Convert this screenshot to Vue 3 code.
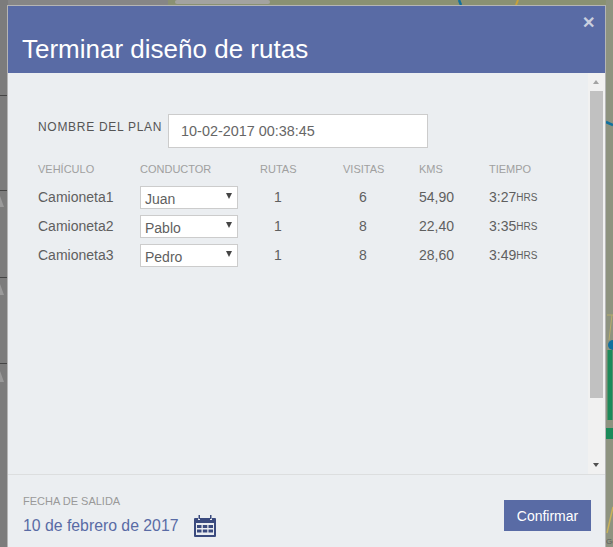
<template>
  <div class="page">
    <svg class="map" width="613" height="547" viewBox="0 0 613 547">
      <rect width="613" height="547" fill="#8c9082" />
      <rect x="0" y="0" width="168" height="6" fill="#868686" />
      <rect x="168" y="0" width="445" height="6" fill="#8a9173" />
      <rect x="175" y="0" width="95" height="4" rx="2" fill="#a3a3a0" />
      <rect x="0" y="0" width="8" height="547" fill="#7c7c7c" />
      <rect x="606" y="0" width="7" height="547" fill="#8e9380" />
      <path d="M0 95.500H8M0 190.500H8M0 277.500H8M0 363.500H8" stroke="#454545" stroke-width="1" />
      <path d="M0 196l4 11H0zM0 284l4 11H0zM0 371l4 11H0z" fill="#9a9a9a" />
      <path d="M459 0l2 5" stroke="#11709e" stroke-width="2.500" fill="none" />
      <path d="M518 0l-2 5" stroke="#c9a23a" stroke-width="2" fill="none" />
      <path d="M606 122l7 3" stroke="#11709e" stroke-width="2.500" fill="none" />
      <path d="M607 315h6M612 315l-3 25" stroke="#b7ac6c" stroke-width="1" fill="none" />
      <circle cx="613" cy="345" r="5" fill="#11709e" />
      <path d="M610 350v70" stroke="#1d8a5a" stroke-width="5" fill="none" />
      <rect x="606" y="428" width="7" height="11" fill="#1d8a5a" />
      <path d="M607 533l6-26" stroke="#c9b25a" stroke-width="1.500" fill="none" />
      <text x="606" y="544" font-size="8" fill="#5c5c5c" font-family="Liberation Sans">Go</text>
    </svg>
    <div class="modal">
      <header class="head">
        <h1>Terminar diseño de rutas</h1>
        <span class="close">✕</span>
      </header>
      <div class="middle">
        <div class="content">
          <div class="plan">
            <label>NOMBRE DEL PLAN</label>
            <div class="plan-input">10-02-2017 00:38:45</div>
          </div>
          <div class="grid">
            <div class="th">VEHÍCULO</div>
            <div class="th">CONDUCTOR</div>
            <div class="th">RUTAS</div>
            <div class="th">VISITAS</div>
            <div class="th">KMS</div>
            <div class="th">TIEMPO</div>
            <template v-for="r in rows" :key="r.name">
              <div class="td">{{ r.name }}</div>
              <div class="td driver">
                <div class="select">{{ r.driver }}<span class="caret"></span></div>
              </div>
              <div class="td num-r">{{ r.routes }}</div>
              <div class="td num-v">{{ r.visits }}</div>
              <div class="td">{{ r.kms }}</div>
              <div class="td">{{ r.time }}<small>HRS</small></div>
            </template>
          </div>
        </div>
        <div class="scrollbar">
          <span class="arrow up"></span>
          <div class="thumb"></div>
          <span class="arrow down"></span>
        </div>
      </div>
      <footer class="foot">
        <div>
          <div class="foot-label">FECHA DE SALIDA</div>
          <div class="foot-date">
            10 de febrero de 2017
            <svg width="24" height="24" viewBox="0 0 24 24">
              <path fill="#3a4a7e" d="M2 4h3v2h2V4h10v2h2V4h3a1 1 0 0 1 1 1v17a1 1 0 0 1-1 1H2a1 1 0 0 1-1-1V5a1 1 0 0 1 1-1z" />
              <rect x="5.500" y="1" width="1.500" height="4" fill="#3a4a7e" />
              <rect x="17" y="1" width="1.500" height="4" fill="#3a4a7e" />
              <path fill="#eaedf1" d="M3 9h18v12H3z" />
              <path fill="#3a4a7e" d="M4 11h4.500v3H4zM9.800 11h4.500v3H9.800zM15.500 11H20v3h-4.500zM4 15.500h4.500v3H4zM9.800 15.500h4.500v3H9.800zM15.500 15.500H20v3h-4.500z" />
            </svg>
          </div>
        </div>
        <button class="confirm">Confirmar</button>
      </footer>
    </div>
  </div>
</template>

<script setup>
const rows = [
  { name: 'Camioneta1', driver: 'Juan', routes: 1, visits: 6, kms: '54,90', time: '3:27' },
  { name: 'Camioneta2', driver: 'Pablo', routes: 1, visits: 8, kms: '22,40', time: '3:35' },
  { name: 'Camioneta3', driver: 'Pedro', routes: 1, visits: 8, kms: '28,60', time: '3:49' }
]
</script>

<style>
html, body {
  margin: 0;
  overflow: hidden;
}
</style>

<style scoped>
.page {
  position: relative;
  width: 613px;
  height: 547px;
  overflow: hidden;
  padding: 5px 7px 0 7px;
  box-sizing: border-box;
  font-family: "Liberation Sans", Arial, sans-serif;
  color: #555;
}

.map {
  position: absolute;
  left: 0;
  top: 0;
}

.modal {
  position: relative;
  width: 599px;
  height: 542px;
  box-sizing: border-box;
  border: 1px solid #b5b5b5;
  border-bottom: 0;
  background: #ebeef1;
  display: flex;
  flex-direction: column;
}

.head {
  position: relative;
  height: 67px;
  flex: none;
  background: #596ba5;
  color: #fff;
}

.head h1 {
  margin: 0;
  padding: 28px 0 0 14px;
  font-size: 26px;
  line-height: 30px;
  font-weight: 400;
}

.close {
  position: absolute;
  top: 7px;
  right: 10px;
  font-size: 16px;
  font-weight: 700;
  color: #c9cfdf;
}

.middle {
  flex: 1;
  display: flex;
  min-height: 0;
  border-bottom: 1px solid #dcdedf;
}

.content {
  flex: 1;
  padding: 41px 0 0 30px;
}

.plan {
  display: flex;
  align-items: flex-start;
  gap: 6px;
}

.plan label {
  font-size: 12px;
  letter-spacing: 0.7px;
  line-height: 13px;
  margin-top: 7px;
  color: #555;
}

.plan-input {
  width: 260px;
  height: 34px;
  box-sizing: border-box;
  border: 1px solid #ccc;
  background: #fff;
  font-size: 14.400px;
  line-height: 32px;
  padding-left: 12px;
  color: #666;
}

.grid {
  display: grid;
  grid-template-columns: 102px 120px 83px 76px 70px 90px;
  grid-template-rows: 27px;
  grid-auto-rows: 29px;
  margin-top: 8px;
}

.th {
  font-size: 11px;
  color: #a0a0a0;
  line-height: 13px;
  padding-top: 7px;
}

.td {
  font-size: 14px;
  color: #5f5f5f;
  display: flex;
  align-items: center;
  height: 29px;
  box-sizing: border-box;
  padding-bottom: 2px;
}

.td.driver {
  padding-bottom: 0;
}

.td small {
  font-size: 10px;
  margin-top: 2px;
}

.num-r {
  padding-left: 14px;
}

.num-v {
  padding-left: 16px;
}

.select {
  position: relative;
  width: 98px;
  height: 23px;
  box-sizing: border-box;
  border: 1px solid #ccc;
  background: #fff;
  line-height: 24px;
  padding-left: 4px;
}

.caret {
  position: absolute;
  right: 5px;
  top: 6px;
  border-left: 3px solid transparent;
  border-right: 3px solid transparent;
  border-top: 6px solid #444;
}

.scrollbar {
  position: relative;
  width: 17px;
  flex: none;
  background: #f1f1f1;
}

.thumb {
  position: absolute;
  left: 2px;
  right: 2px;
  top: 18px;
  height: 307px;
  background: #c1c1c1;
}

.arrow {
  position: absolute;
  left: 5px;
  border-left: 3.500px solid transparent;
  border-right: 3.500px solid transparent;
}

.arrow.up {
  top: 7px;
  border-bottom: 4px solid #a3a3a3;
}

.arrow.down {
  bottom: 7px;
  border-top: 4px solid #505050;
}

.foot {
  height: 72px;
  flex: none;
  display: flex;
  justify-content: space-between;
  align-items: flex-start;
  padding: 20px 14px 0 15px;
  box-sizing: border-box;
}

.foot-label {
  font-size: 11px;
  line-height: 13px;
  color: #999;
}

.foot-date {
  display: flex;
  align-items: center;
  gap: 15px;
  margin-top: 6px;
  font-size: 15.800px;
  color: #596ba5;
}

.confirm {
  margin-top: 5px;
  width: 87px;
  height: 31px;
  border: 0;
  background: #596ba5;
  color: #fff;
  font-family: inherit;
  font-size: 14px;
  font-weight: 400;
}
</style>
